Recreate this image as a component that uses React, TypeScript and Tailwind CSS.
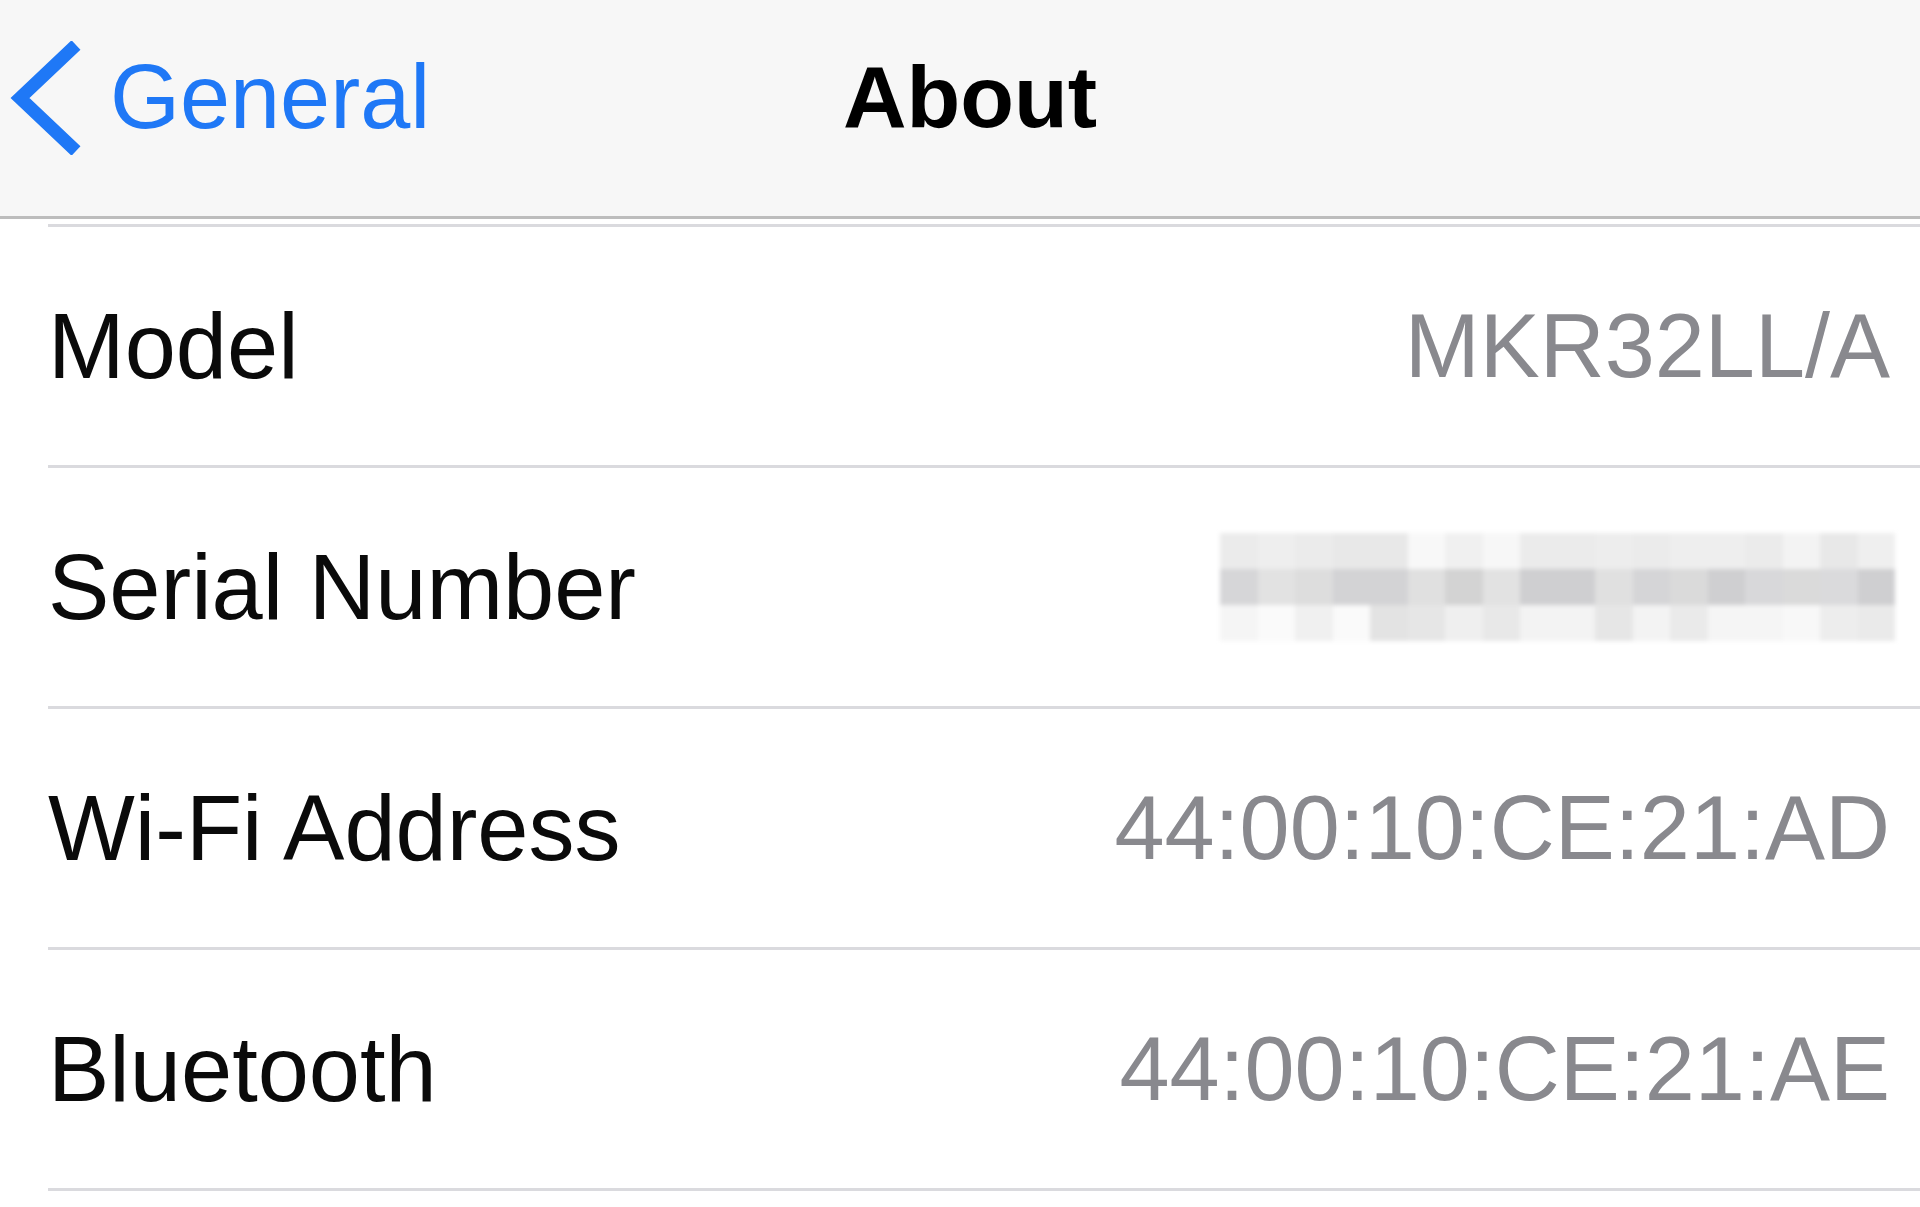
import React from "react";

const rowsTop = [
  "#ebebeb", "#eeeeee", "#ebebeb", "#e8e8e8", "#e8e8e8", "#f8f8f8", "#f0f0f0", "#f7f7f7", "#ebebeb",
  "#ebebeb", "#ededed", "#ebebeb", "#eeeeee", "#eeeeee", "#ebebeb", "#f3f3f3", "#e8e8e8", "#efefef",
];
const rowsMid = [
  "#d6d6d8", "#e2e2e2", "#dddddd", "#d3d3d5", "#d3d3d5", "#e0e0e0", "#d3d3d3", "#e2e2e2", "#cfcfd1",
  "#cfcfd1", "#e0e0e0", "#d5d5d7", "#dadada", "#cfcfd1", "#d8d8da", "#dadada", "#dadadc", "#cfcfd1",
];
const rowsBot = [
  "#f5f5f5", "#fafafa", "#f0f0f0", "#fafafa", "#e3e3e3", "#e6e6e6", "#efefef", "#e8e8e8", "#f3f3f3",
  "#f3f3f3", "#e6e6e6", "#f3f3f3", "#eaeaea", "#f5f5f5", "#f5f5f5", "#f8f8f8", "#ededed", "#eaeaea",
];

function Pixelated() {
  return (
    <div className="-mr-[5px] flex flex-col blur-[2px]">
      {[rowsTop, rowsMid, rowsBot].map((row, i) => (
        <div key={i} className="flex">
          {row.map((c, j) => (
            <div key={j} className="h-[36px] w-[37.5px]" style={{ backgroundColor: c }} />
          ))}
        </div>
      ))}
    </div>
  );
}

function Separator() {
  return <div className="ml-[2px] h-[3px] bg-[#dadade]" />;
}

function Row({ label, value }: { label: string; value: React.ReactNode }) {
  return (
    <div className="flex h-[238px] items-center justify-between pr-[30px]">
      <span className="ml-[2px] text-[92px] leading-none text-[#0a0a0a]">{label}</span>
      {typeof value === "string" ? (
        <span className="text-[90px] leading-none text-[#89898e]">{value}</span>
      ) : (
        value
      )}
    </div>
  );
}

export default function App() {
  return (
    <div
      className="h-[1207px] w-[1920px] overflow-hidden bg-white"
      style={{ fontFamily: '"Liberation Sans", Arial, sans-serif' }}
    >
      <header className="grid h-[219px] grid-cols-[1fr_auto_1fr] items-center border-b-[3px] border-[#bdbdbd] bg-[#f7f7f7] pb-[22px]">
        <div className="flex items-center">
          <svg
            width="72"
            height="114"
            viewBox="0 0 72 114"
            className="ml-[10px] mt-[2px]"
          >
            <polyline
              points="66,4 10,57 66,110"
              fill="none"
              stroke="#1f78f6"
              strokeWidth="13"
              strokeLinecap="butt"
              strokeLinejoin="miter"
            />
          </svg>
          <span className="ml-[28px] text-[90px] leading-none text-[#1f78f6]">General</span>
        </div>
        <span className="pl-[20px] text-[88px] font-bold leading-none text-black">About</span>
        <div />
      </header>
      <div className="pt-[5px] pl-[46px]">
        <Separator />
        <Row label="Model" value="MKR32LL/A" />
        <Separator />
        <Row label="Serial Number" value={<Pixelated />} />
        <Separator />
        <Row label="Wi-Fi Address" value="44:00:10:CE:21:AD" />
        <Separator />
        <Row label="Bluetooth" value="44:00:10:CE:21:AE" />
        <Separator />
      </div>
    </div>
  );
}
